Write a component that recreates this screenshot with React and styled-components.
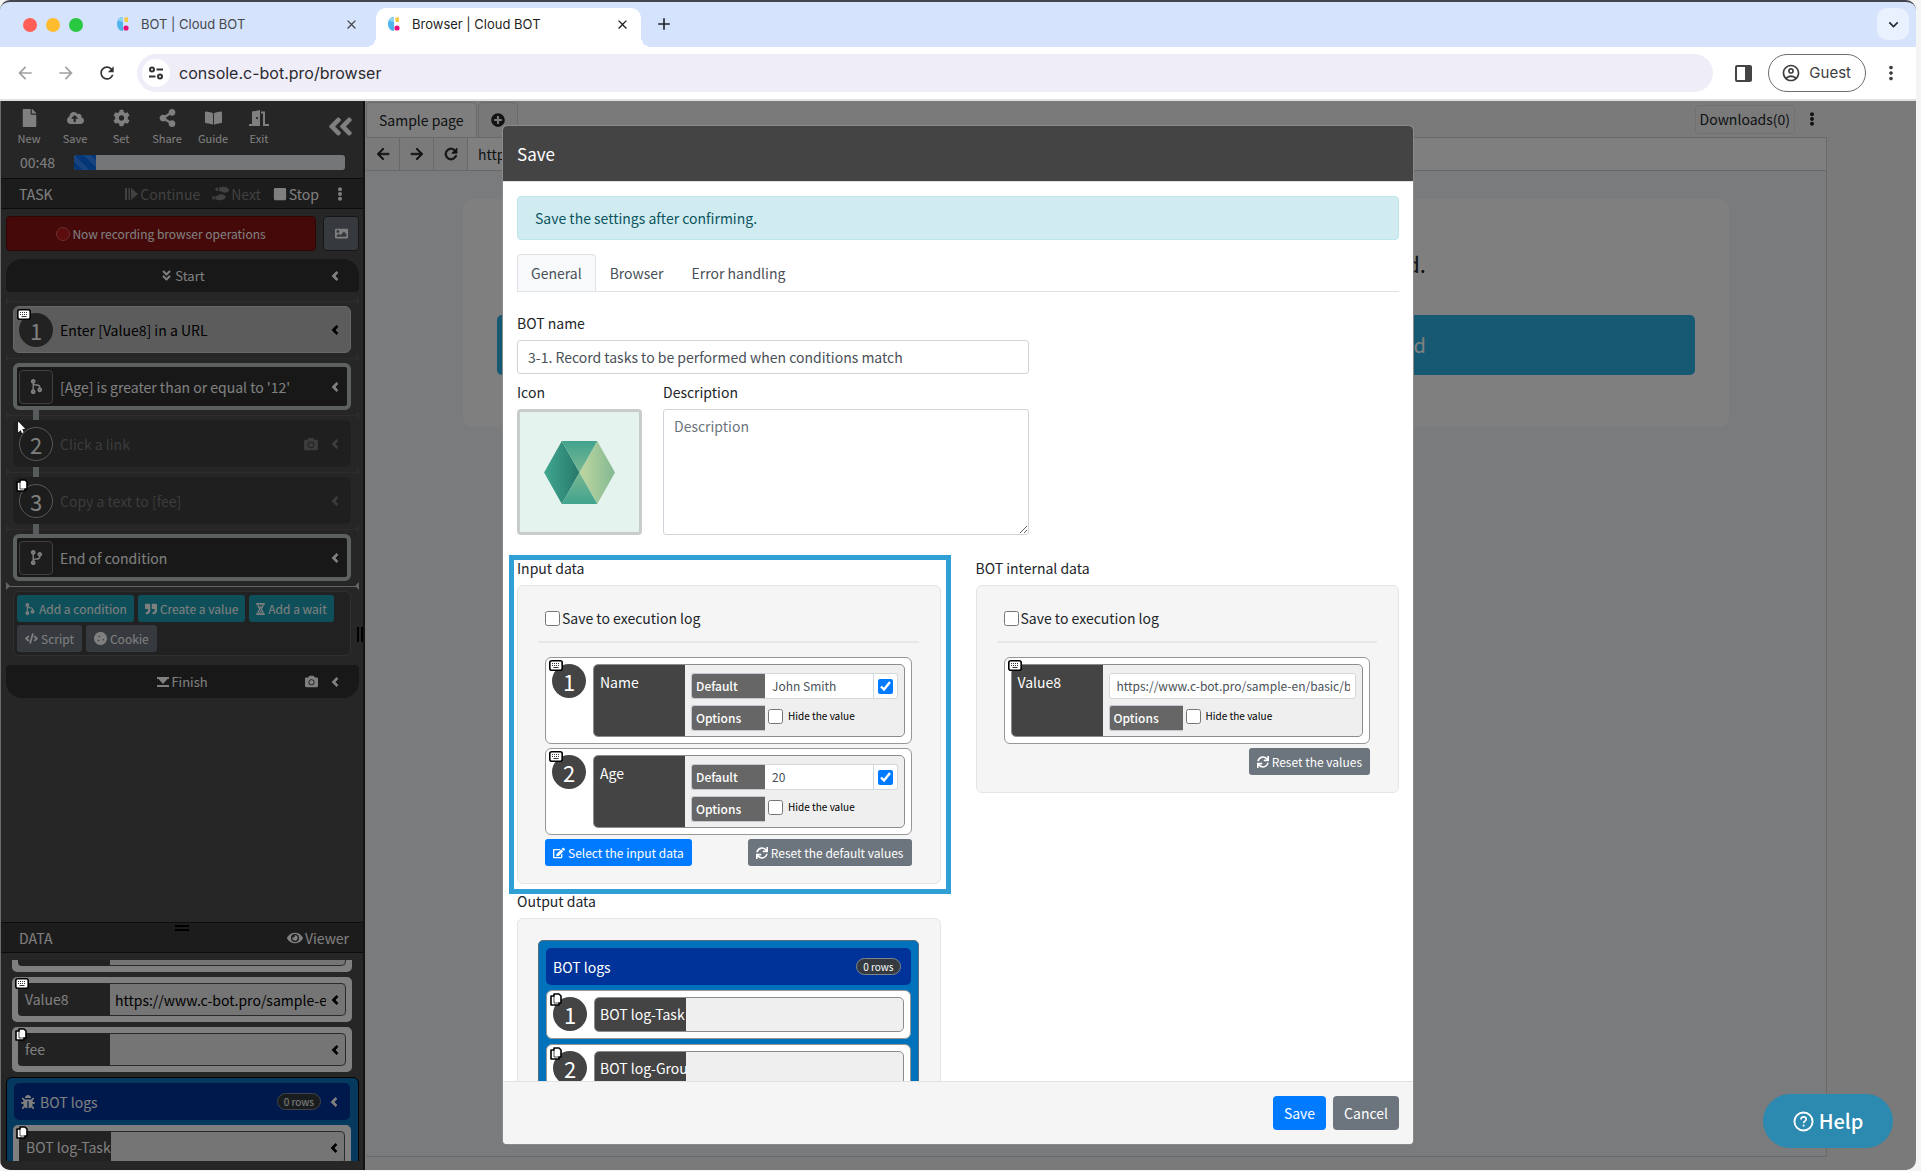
import React from 'react';
import styled, { createGlobalStyle, css } from 'styled-components';
import {
  FaAngleDoubleDown,
  FaAngleDoubleLeft,
  FaAngleLeft,
  FaBookOpen,
  FaBug,
  FaCamera,
  FaCloudUploadAlt,
  FaCode,
  FaCodeBranch,
  FaCog,
  FaCookie,
  FaEdit,
  FaEllipsisV,
  FaEye,
  FaFile,
  FaImage,
  FaMousePointer,
  FaPlusCircle,
  FaQuoteRight,
  FaShareAlt,
  FaShoePrints,
  FaSquare,
  FaSync,
} from 'react-icons/fa';
import {
  MdArrowBack,
  MdArrowForward,
  MdClose,
  MdAdd,
  MdKeyboardArrowDown,
  MdMoreVert,
  MdOutlineAccountCircle,
  MdRefresh,
} from 'react-icons/md';

const tools = [
  { label: 'New', icon: <FaFile /> },
  { label: 'Save', icon: <FaCloudUploadAlt /> },
  { label: 'Set', icon: <FaCog /> },
  { label: 'Share', icon: <FaShareAlt /> },
  { label: 'Guide', icon: <FaBookOpen /> },
  { label: 'Exit', icon: <DoorIcon /> },
];

const inputs = [
  { id: 1, name: 'Name', value: 'John Smith' },
  { id: 2, name: 'Age', value: '20' },
];

const logs = [
  { id: 1, name: 'BOT log-Task' },
  { id: 2, name: 'BOT log-Group' },
];

export default function App() {
  return (
    <>
      <GlobalStyle />
      <Window>
        <TabStrip />
        <AddressBar />
        <Workspace>
          <Sidebar />
          <RemoteBrowser />
          <Overlay>
            <SaveDialog />
          </Overlay>
          <HelpButton type='button'>
            <HelpIcon />
            Help
          </HelpButton>
        </Workspace>
      </Window>
    </>
  );
}

/* browser chrome */

function TabStrip() {
  return (
    <Strip>
      <Lights>
        <Light $color='#ff5f57' />
        <Light $color='#febc2e' />
        <Light $color='#28c840' />
      </Lights>
      <Tab>
        <CloudLogo />
        <TabTitle>BOT | Cloud BOT</TabTitle>
        <IconButton type='button' aria-label='Close tab'><MdClose /></IconButton>
      </Tab>
      <Tab $active>
        <CloudLogo />
        <TabTitle>Browser | Cloud BOT</TabTitle>
        <IconButton type='button' aria-label='Close tab'><MdClose /></IconButton>
      </Tab>
      <NewTab type='button' aria-label='New tab'><MdAdd /></NewTab>
      <TabSearch type='button' aria-label='Search tabs'><MdKeyboardArrowDown /></TabSearch>
    </Strip>
  );
}

function AddressBar() {
  return (
    <Toolbar>
      <NavButton type='button' aria-label='Back' $muted><MdArrowBack /></NavButton>
      <NavButton type='button' aria-label='Forward' $muted><MdArrowForward /></NavButton>
      <NavButton type='button' aria-label='Reload'><MdRefresh /></NavButton>
      <Omnibox>
        <SiteInfo type='button' aria-label='Site information'>
          <svg width='16' height='16' viewBox='0 0 16 16' fill='none' stroke='#333' strokeWidth='2'>
            <circle cx='4' cy='4.5' r='2' />
            <path d='M8.5 4.5H15M1 11.5h6.5' />
            <circle cx='12' cy='11.5' r='2' />
          </svg>
        </SiteInfo>
        <UrlInput aria-label='Address' defaultValue='console.c-bot.pro/browser' />
      </Omnibox>
      <PanelButton type='button' aria-label='Side panel'>
        <svg width='17' height='17' viewBox='0 0 17 17'>
          <rect x='1' y='1' width='15' height='15' rx='1' fill='#fff' stroke='#444' strokeWidth='2' />
          <rect x='10' y='1' width='6' height='15' fill='#444' />
        </svg>
      </PanelButton>
      <Guest type='button'>
        <MdOutlineAccountCircle />
        Guest
      </Guest>
      <MenuButton type='button' aria-label='Menu'><MdMoreVert /></MenuButton>
    </Toolbar>
  );
}

/* left hand task editor */

function Sidebar() {
  return (
    <Side>
      <SideTop>
        <ToolRow>
          {tools.map((tool) => (
            <Tool type='button' key={tool.label}>
              {tool.icon}
              {tool.label}
            </Tool>
          ))}
          <Collapse type='button' aria-label='Collapse'><FaAngleDoubleLeft /></Collapse>
        </ToolRow>
        <TimeRow>
          <span>00:48</span>
          <Progress><Bar style={{ width: '8%' }} /></Progress>
        </TimeRow>
      </SideTop>
      <SectionBar>
        <SectionTitle>TASK</SectionTitle>
        <BarButton type='button' disabled><ContinueIcon />Continue</BarButton>
        <BarButton type='button' disabled><FaShoePrints size='17' />Next</BarButton>
        <BarButton type='button'><FaSquare />Stop</BarButton>
        <BarButton type='button' aria-label='Task menu'><FaEllipsisV /></BarButton>
      </SectionBar>
      <Tasks>
        <RecordRow>
          <Recording type='button'><Dot />Now recording browser operations</Recording>
          <Shot type='button' aria-label='Screenshot'><FaImage /></Shot>
        </RecordRow>
        <EndCap>
          <span><FaAngleDoubleDown />Start</span>
          <Arrow />
        </EndCap>
        <Gap $first />
        <Task $kind='light'>
          <Badge><KeyboardIcon /></Badge>
          <Number>1</Number>
          <TaskName>Enter [Value8] in a URL</TaskName>
          <Arrow />
        </Task>
        <Gap />
        <Task $kind='branch'>
          <BranchBox $flip><FaCodeBranch /></BranchBox>
          <TaskName>[Age] is greater than or equal to '12'</TaskName>
          <Arrow />
        </Task>
        <Gap $link />
        <Task $kind='faint'>
          <Badge><FaMousePointer /></Badge>
          <Number $ring>2</Number>
          <TaskName>Click a link</TaskName>
          <FaCamera />
          <Arrow />
        </Task>
        <Gap $link />
        <Task $kind='faint'>
          <Badge><CopyIcon /></Badge>
          <Number $ring>3</Number>
          <TaskName>Copy a text to [fee]</TaskName>
          <Arrow />
        </Task>
        <Gap $link />
        <Task $kind='branch'>
          <BranchBox><FaCodeBranch /></BranchBox>
          <TaskName>End of condition</TaskName>
          <Arrow />
        </Task>
        <Gap $bright />
        <AddBox>
          <AddButton type='button'><Flipped><FaCodeBranch /></Flipped>Add a condition</AddButton>
          <AddButton type='button'><FaQuoteRight />Create a value</AddButton>
          <AddButton type='button'><HourglassIcon />Add a wait</AddButton>
          <AddButton type='button' $grey><FaCode />Script</AddButton>
          <AddButton type='button' $grey><FaCookie />Cookie</AddButton>
        </AddBox>
        <EndCap $bottom>
          <span><FinishIcon />Finish</span>
          <FaCamera />
          <Arrow />
        </EndCap>
        <Grip />
      </Tasks>
      <DataPane>
        <SectionBar>
          <SectionTitle>DATA</SectionTitle>
          <BarButton type='button'><FaEye size='16' />Viewer</BarButton>
          <PaneGrip />
        </SectionBar>
        <DataList>
          <DataScroll>
            <DataRow><DataName /><DataValue /></DataRow>
            <DataRow>
              <Badge><KeyboardIcon /></Badge>
              <DataName>Value8</DataName>
              <DataValue><span>https://www.c-bot.pro/sample-en</span><Arrow /></DataValue>
            </DataRow>
            <DataRow>
              <Badge><CopyIcon /></Badge>
              <DataName>fee</DataName>
              <DataValue><span /><Arrow /></DataValue>
            </DataRow>
            <SideLogs>
              <LogsHead>
                <FaBug />
                <LogsTitle>BOT logs</LogsTitle>
                <Pill>0 rows</Pill>
                <Arrow />
              </LogsHead>
              <DataRow>
                <Badge><CopyIcon /></Badge>
                <DataName>BOT log-Task</DataName>
                <DataValue><span /><Arrow /></DataValue>
              </DataRow>
            </SideLogs>
          </DataScroll>
        </DataList>
      </DataPane>
    </Side>
  );
}

/* recorded page behind the dialog */

function RemoteBrowser() {
  return (
    <Remote>
      <RemoteTabs>
        <RemoteTab type='button' $active>Sample page</RemoteTab>
        <RemoteTab type='button' aria-label='Add page'><FaPlusCircle /></RemoteTab>
        <Downloads type='button'>Downloads(0)</Downloads>
        <RemoteMenu type='button' aria-label='Page menu'><FaEllipsisV /></RemoteMenu>
      </RemoteTabs>
      <RemoteFrame>
        <RemoteBar>
          <RemoteNav type='button' aria-label='Page back'><MdArrowBack /></RemoteNav>
          <RemoteNav type='button' aria-label='Page forward'><MdArrowForward /></RemoteNav>
          <RemoteNav type='button' aria-label='Page reload'><MdRefresh /></RemoteNav>
          <RemoteUrl aria-label='Page address' defaultValue='http' />
        </RemoteBar>
        <RemotePage>
          <SampleCard>
            <p>d.</p>
            <button type='button'>ld</button>
          </SampleCard>
        </RemotePage>
      </RemoteFrame>
    </Remote>
  );
}

/* save dialog */

function SaveDialog() {
  return (
    <Dialog role='dialog' aria-labelledby='dialog-title'>
      <DialogHead id='dialog-title'>Save</DialogHead>
      <DialogBody>
        <Alert>Save the settings after confirming.</Alert>
        <NavTabs>
          <NavTab type='button' $active>General</NavTab>
          <NavTab type='button'>Browser</NavTab>
          <NavTab type='button'>Error handling</NavTab>
        </NavTabs>
        <Form>
          <Label htmlFor='bot-name'>BOT name</Label>
          <TextInput id='bot-name' defaultValue='3-1. Record tasks to be performed when conditions match' />
          <FormRow>
            <div>
              <Label as='div'>Icon</Label>
              <BotIcon type='button' aria-label='Icon'><HexIcon /></BotIcon>
            </div>
            <Grow>
              <Label htmlFor='description'>Description</Label>
              <TextArea id='description' placeholder='Description' />
            </Grow>
          </FormRow>
        </Form>
        <Columns>
          <Section $highlight>
            <Label as='h2'>Input data</Label>
            <Panel>
              <Check>
                <input type='checkbox' />
                Save to execution log
              </Check>
              <Rule />
              <Cards>
                {inputs.map((input) => (
                  <Card key={input.id}>
                    <Badge><KeyboardIcon /></Badge>
                    <Number $dialog>{input.id}</Number>
                    <CardInner>
                      <CardName>{input.name}</CardName>
                      <Fields>
                        <Field>
                          <FieldLabel htmlFor={`default-${input.id}`}>Default</FieldLabel>
                          <FieldInput id={`default-${input.id}`} defaultValue={input.value} />
                          <FieldCheck>
                            <input type='checkbox' defaultChecked aria-label='Use default' />
                          </FieldCheck>
                        </Field>
                        <Options />
                      </Fields>
                    </CardInner>
                  </Card>
                ))}
                <Actions>
                  <SmallButton type='button' $primary><FaEdit />Select the input data</SmallButton>
                  <SmallButton type='button'><FaSync />Reset the default values</SmallButton>
                </Actions>
              </Cards>
            </Panel>
          </Section>
          <Section>
            <Label as='h2'>BOT internal data</Label>
            <Panel>
              <Check>
                <input type='checkbox' />
                Save to execution log
              </Check>
              <Rule />
              <Cards>
                <Card>
                  <Badge><KeyboardIcon /></Badge>
                  <CardInner>
                    <CardName>Value8</CardName>
                    <Fields>
                      <Field>
                        <FieldInput
                          $round
                          aria-label='Value8'
                          defaultValue='https://www.c-bot.pro/sample-en/basic/bot'
                        />
                      </Field>
                      <Options />
                    </Fields>
                  </CardInner>
                </Card>
                <Actions $end>
                  <SmallButton type='button'><FaSync />Reset the values</SmallButton>
                </Actions>
              </Cards>
            </Panel>
          </Section>
          <Section>
            <Label as='h2'>Output data</Label>
            <Panel>
              <DialogLogs>
                <LogsHead $dialog>
                  <LogsTitle>BOT logs</LogsTitle>
                  <Pill>0 rows</Pill>
                </LogsHead>
                {logs.map((log) => (
                  <Card key={log.id}>
                    <Badge><CopyIcon /></Badge>
                    <Number $dialog>{log.id}</Number>
                    <CardInner $short>
                      <CardName $short>{log.name}</CardName>
                    </CardInner>
                  </Card>
                ))}
              </DialogLogs>
            </Panel>
          </Section>
        </Columns>
      </DialogBody>
      <DialogFoot>
        <FootButton type='button' $primary>Save</FootButton>
        <FootButton type='button'>Cancel</FootButton>
      </DialogFoot>
    </Dialog>
  );
}

function Options() {
  return (
    <Field>
      <FieldLabel as='span'>Options</FieldLabel>
      <HideCheck>
        <input type='checkbox' />
        Hide the value
      </HideCheck>
    </Field>
  );
}

/* icons */

function Arrow() {
  return <ArrowIcon aria-hidden='true' />;
}

function CloudLogo() {
  return (
    <svg width='14' height='16' viewBox='0 0 14 16'>
      <path d='M7 1C3 1 1 4.5 1 8s2 7 6 7z' fill='#4db4ee' />
      <path d='M7 1v5L2 4.5C3 2.5 5 1 7 1z' fill='#8fd4f5' />
      <path d='M8 2l4-1v5H9z' fill='#f6c844' />
      <circle cx='10' cy='12' r='2.6' fill='#e5107a' />
    </svg>
  );
}

function DoorIcon() {
  return (
    <svg width='20' height='16' viewBox='0 0 20 16' fill='currentColor'>
      <path fillRule='evenodd' d='M3 1.5 11 0v16H0v-2h3zM8 7a1 1 0 1 0 0 2.2A1 1 0 0 0 8 7z' />
      <path d='M12 1.5h4V14h4v2h-6V3.5h-2z' />
    </svg>
  );
}

function ContinueIcon() {
  return (
    <svg width='13' height='14' viewBox='0 0 13 14' fill='currentColor'>
      <path d='M0 1h2v12H0zM3.5 1h1.5v12H3.5zM6 1l7 6-7 6z' />
    </svg>
  );
}

function KeyboardIcon() {
  return (
    <svg width='14' height='11' viewBox='0 0 14 11'>
      <rect x='.8' y='.8' width='12.4' height='9.4' rx='2' fill='#fff' stroke='#000' strokeWidth='1.6' />
      <path d='M3 3.5h8M3 5.5h8' stroke='#333' strokeDasharray='1 1' />
      <path d='M4.5 7.5h5' stroke='#333' />
    </svg>
  );
}

function CopyIcon() {
  return (
    <svg width='12' height='13' viewBox='0 0 12 13' fill='#fff' stroke='#000'>
      <path d='M4 1h5l2 2v7H9v2H1V3h3z' strokeWidth='1.6' strokeLinejoin='round' />
      <path d='M4 3v7h5' fill='none' strokeWidth='.7' />
    </svg>
  );
}

function HourglassIcon() {
  return (
    <svg width='9' height='12' viewBox='0 0 10 14' fill='currentColor'>
      <path d='M0 0h10v2H0zM0 12h10v2H0z' />
      <path d='M2 2c0 3 2 3.5 2 5s-2 2-2 5M8 2c0 3-2 3.5-2 5s2 2 2 5' fill='none' stroke='currentColor' strokeWidth='1.5' />
      <path d='M3 4h4L5 7zM3 11l2-2 2 2z' />
    </svg>
  );
}

function FinishIcon() {
  return (
    <svg width='12' height='10' viewBox='0 0 12 10' fill='currentColor'>
      <path d='M0 0h12v2H0zM1.5 2h9L6 7zM0 8h12v2H0z' />
    </svg>
  );
}

function HelpIcon() {
  return (
    <svg width='21' height='21' viewBox='0 0 22 22' fill='none' stroke='currentColor' strokeWidth='2'>
      <circle cx='11' cy='11' r='9.5' />
      <path d='M8.3 9c0-3.8 5.6-3.5 5.6-.4 0 2-2.8 1.9-2.8 4M11.1 14.2v2' strokeWidth='1.7' />
    </svg>
  );
}

function HexIcon() {
  return (
    <svg width='71' height='63' viewBox='0 0 72 64'>
      <defs>
        <linearGradient id='hex-left'><stop stopColor='#41a78f' /><stop offset='1' stopColor='#27786b' /></linearGradient>
        <linearGradient id='hex-right'><stop stopColor='#c0d7a0' /><stop offset='1' stopColor='#82b992' /></linearGradient>
        <linearGradient id='hex-top' x2='0' y2='1'><stop stopColor='#41a38e' /><stop offset='1' stopColor='#7ab792' /></linearGradient>
        <linearGradient id='hex-bottom' x2='0' y2='1'><stop stopColor='#7ab792' /><stop offset='1' stopColor='#41a38e' /></linearGradient>
      </defs>
      <path d='M0 32 18 0l18 32-18 32z' fill='url(#hex-left)' />
      <path d='M72 32 54 0 36 32l18 32z' fill='url(#hex-right)' />
      <path d='M18 0h36L36 32z' fill='url(#hex-top)' />
      <path d='M18 64h36L36 32z' fill='url(#hex-bottom)' />
    </svg>
  );
}

const GlobalStyle = createGlobalStyle`
  *, *::before, *::after {
    box-sizing: border-box;
  }

  body {
    margin: 0;
    background: #f4f4f4;
    color: #212529;
    font-family: "Noto Sans CJK JP", "Noto Sans", sans-serif;
    font-size: 14px;
    line-height: 22px;
  }

  button, input, textarea {
    font: inherit;
    color: inherit;
    margin: 0;
  }

  button {
    padding: 0;
    border: 0;
    background: none;
    display: inline-flex;
    align-items: center;
    justify-content: center;
    white-space: nowrap;
  }

  h1, h2, p {
    margin: 0;
    font-weight: 400;
  }

  svg {
    flex: none;
  }
`

const Window = styled.div`
  display: flex;
  flex-direction: column;
  height: 100vh;
  padding: 0 5px 1px 0;
`

const Strip = styled.div`
  display: flex;
  align-items: flex-end;
  height: 47px;
  flex: none;
  padding: 0 7px 0 23px;
  border-top: 2px solid #45454d;
  border-radius: 10px 10px 0 0;
  background: #d5e3fd;
  font-family: Inter, sans-serif;
  font-size: 13px;
`

const Lights = styled.div`
  display: flex;
  gap: 9px;
  align-self: center;
`

const Light = styled.span`
  width: 14px;
  height: 14px;
  border-radius: 50%;
  background: ${(props) => props.$color};
`

const Tab = styled.div`
  position: relative;
  display: flex;
  align-items: center;
  gap: 11px;
  width: 265px;
  height: 39px;
  padding: 0 11px 7px;
  color: #46484c;

  ${Lights} + & {
    margin-left: 22px;
  }

  ${(props) => props.$active && css`
    margin-left: 6px;
    background: #fff;
    color: #1f1f1f;
    border-radius: 10px 10px 0 0;

    &::before, &::after {
      content: '';
      position: absolute;
      bottom: 0;
      width: 10px;
      height: 10px;
    }

    &::before {
      left: -10px;
      background: radial-gradient(circle at 0 0, transparent 10px, #fff 10px);
    }

    &::after {
      right: -10px;
      background: radial-gradient(circle at 100% 0, transparent 10px, #fff 10px);
    }
  `}
`

const TabTitle = styled.span`
  flex: 1;
`

const IconButton = styled.button`
  font-size: 15px;
`

const NewTab = styled.button`
  height: 39px;
  margin-left: 13px;
  padding-bottom: 7px;
  font-size: 20px;
`

const TabSearch = styled.button`
  width: 32px;
  height: 32px;
  margin: 0 0 7px auto;
  border-radius: 10px;
  background: #e9f0fe;
  font-size: 19px;
`

const Toolbar = styled.div`
  display: flex;
  align-items: center;
  flex: none;
  height: 54px;
  padding: 0 14px;
  border-bottom: 2px solid #dfe1e1;
  background: #fff;
  font-family: Inter, sans-serif;
  color: #3c3c3c;
`

const NavButton = styled.button`
  width: 22px;
  margin-right: 19px;
  font-size: 20px;
  color: ${(props) => (props.$muted ? '#a0a0a0' : '#333')};
`

const Omnibox = styled.div`
  display: flex;
  align-items: center;
  flex: 1;
  gap: 9px;
  height: 38px;
  padding: 0 5px;
  border-radius: 19px;
  background: #efeef8;
`

const SiteInfo = styled.button`
  width: 28px;
  height: 28px;
  border-radius: 50%;
  background: #fff;
`

const UrlInput = styled.input`
  flex: 1;
  border: 0;
  padding: 0;
  background: none;
  outline: 0;
  color: #2b2b2f;
  font-size: 16px;
`

const PanelButton = styled.button`
  margin: 0 16px 0 22px;
`

const Guest = styled.button`
  gap: 8px;
  height: 38px;
  padding: 0 14px 0 12px;
  border: 1px solid #6d6d6d;
  border-radius: 19px;
  font-size: 15px;

  svg {
    font-size: 20px;
  }
`

const MenuButton = styled.button`
  margin-left: 14px;
  font-size: 22px;
`

const Workspace = styled.div`
  position: relative;
  display: flex;
  flex: 1;
  min-height: 0;
  overflow: hidden;
  border-radius: 0 0 10px 10px;
`

const Side = styled.aside`
  display: flex;
  flex-direction: column;
  flex: none;
  width: 365px;
  border-right: 2px solid #262626;
  border-left: 1px solid #d8d8d8;
  background: #4c4c4c;
  color: #fff;
`

const SideTop = styled.div`
  flex: none;
  height: 77px;
  padding: 8px 18px 0 5px;
`

const ToolRow = styled.div`
  display: flex;
  height: 42px;
`

const Tool = styled.button`
  flex-direction: column;
  justify-content: flex-start;
  gap: 3px;
  width: 46px;
  font-size: 11px;
  line-height: 16px;

  svg {
    height: 18px;
    font-size: 17px;
  }
`

const Collapse = styled.button`
  margin: 0 -10px 0 auto;
  padding-bottom: 7px;
  font-size: 29px;
`

const TimeRow = styled.div`
  display: flex;
  align-items: center;
  gap: 19px;
  padding-left: 14px;
`

const Progress = styled.div`
  flex: 1;
  height: 15px;
  border-radius: 3px;
  background: #e9ecef;
  overflow: hidden;
`

const Bar = styled.div`
  height: 100%;
  background: repeating-linear-gradient(45deg, #0a6cf0 0 6px, #2f86ff 6px 11px);
`

const SectionBar = styled.div`
  position: relative;
  display: flex;
  align-items: center;
  flex: none;
  gap: 12px;
  height: 31px;
  padding: 0 14px 0 18px;
  border-top: 1px solid #181818;
  border-bottom: 1px solid #181818;
  background: #383838;
`

const SectionTitle = styled.h2`
  flex: 1;
  font-size: 14px;
`

const BarButton = styled.button`
  gap: 2px;

  &:disabled {
    color: #828282;
  }

  &:last-of-type {
    min-width: 18px;
  }
`

const Tasks = styled.div`
  position: relative;
  flex: 1;
  min-height: 0;
  padding: 7px 4px 0 5px;
`

const RecordRow = styled.div`
  display: flex;
  gap: 7px;
  margin-bottom: 8px;
`

const Recording = styled.button`
  flex: 1;
  gap: 2px;
  height: 35px;
  border: 1px solid #5c0c0c;
  border-radius: 4px;
  background: #8a1212;
  font-size: 12px;
`

const Dot = styled.span`
  width: 14px;
  height: 14px;
  border: 1px solid #d06060;
  border-radius: 50%;
  background: #b81818;
`

const Shot = styled.button`
  width: 36px;
  border: 1px solid #2c2c2c;
  border-radius: 4px;
  background: #6c757d;
  font-size: 13px;
`

const EndCap = styled.div`
  position: relative;
  display: flex;
  align-items: center;
  justify-content: flex-end;
  gap: 10px;
  height: 33px;
  margin-top: ${(props) => (props.$bottom ? '9px' : 0)};
  padding-right: 17px;
  border-radius: ${(props) => (props.$bottom ? '4px 4px 16px 16px' : '16px 16px 4px 4px')};
  background: #303030;
  font-size: 13px;

  span {
    position: absolute;
    inset: 0;
    display: flex;
    align-items: center;
    justify-content: center;
    gap: 2px;
  }

  svg {
    font-size: 13px;
  }
`

const ArrowIcon = styled(FaAngleLeft)`
  && {
    font-size: 14px;
    stroke: currentColor;
    stroke-width: 30;
  }
`

/* drop line between two tasks, with a small triangle at each end */
const Gap = styled.div`
  position: relative;
  height: 10px;
  margin-top: ${(props) => (props.$first ? '4px' : 0)};
  color: ${(props) => (props.$bright ? '#c8c8c8' : '#5a5a5a')};
  background: linear-gradient(currentColor, currentColor) 0 50% / 100% 1px no-repeat;

  &::before, &::after {
    content: '';
    position: absolute;
    top: 1px;
    border: 4px solid transparent;
  }

  &::before {
    left: 0;
    border-left-color: currentColor;
  }

  &::after {
    right: 0;
    border-right-color: currentColor;
  }

  ${(props) => props.$link && css`
    background:
      linear-gradient(#b0b6b6, #b0b6b6) 27px 0 / 6px 100% no-repeat,
      linear-gradient(currentColor, currentColor) 0 50% / 100% 1px no-repeat;
  `}
`

const Task = styled.div`
  position: relative;
  display: flex;
  align-items: center;
  gap: 7px;
  height: 47px;
  margin: 0 8px 0 7px;
  padding: 0 9px 0 6px;
  border-radius: 6px;

  ${(props) => props.$kind === 'light' && css`
    border: 1px solid #cfcfcf;
    background: #b8b8b8;
    color: #000;
    padding: 0 8px 0 5px;
  `}

  ${(props) => props.$kind === 'branch' && css`
    border: 4px solid #b9c0c0;
    background: #303030;
    padding: 0 5px 0 2px;
  `}

  ${(props) => props.$kind === 'faint' && css`
    background: #3e3e3e;
    color: #787878;
  `}
`

const TaskName = styled.span`
  flex: 1;
  white-space: nowrap;

  & + svg:not(:last-child) {
    margin-right: 3px;
  }
`

const Number = styled.span`
  display: flex;
  align-items: center;
  justify-content: center;
  flex: none;
  width: 34px;
  height: 34px;
  border-radius: 50%;
  background: #444;
  color: #fff;
  font-size: 22px;

  ${(props) => props.$ring && css`
    border: 1px solid #b0b0b0;
    background: #3a3a3a;
  `}

  ${(props) => props.$dialog && css`
    margin-right: 7px;
  `}
`

const BranchBox = styled.span`
  display: flex;
  align-items: center;
  justify-content: center;
  flex: none;
  width: 34px;
  height: 34px;
  border: 1px solid #808080;
  border-radius: 4px;
  background: #3a3a3a;
  font-size: 15px;

  svg {
    transform: ${(props) => (props.$flip ? 'scaleY(-1)' : 'none')};
  }
`

const Flipped = styled.span`
  display: flex;
  transform: scaleY(-1);
`

const Badge = styled.span`
  position: absolute;
  z-index: 1;
  top: 2px;
  left: 3px;
  display: flex;
  font-size: 11px;
  color: #fff;
`

const AddBox = styled.div`
  display: flex;
  flex-wrap: wrap;
  gap: 3px 4px;
  margin: 0 8px 0 7px;
  padding: 3px;
  border: 1px solid #606060;
  border-radius: 6px;
  background: #424242;
`

const AddButton = styled.button`
  gap: 3px;
  height: 27px;
  padding: 0 ${(props) => (props.$grey ? '8px' : '7px')};
  border-radius: 3px;
  background: ${(props) => (props.$grey ? '#6c757d' : '#1f9fb4')};
  font-size: 12px;

  svg {
    font-size: ${(props) => (props.$grey ? '13px' : '12px')};
  }
`

const Grip = styled.div`
  position: absolute;
  top: 418px;
  right: 0;
  width: 6px;
  height: 15px;
  border: solid #000;
  border-width: 0 2px;
`

const DataPane = styled.div`
  display: flex;
  flex-direction: column;
  flex: 0 0 248px;
  min-height: 0;
  padding-bottom: 9px;
`

const PaneGrip = styled.span`
  position: absolute;
  top: 2px;
  left: 174px;
  width: 14px;
  height: 6px;
  border: solid #000;
  border-width: 2px 0;
`

const DataList = styled.div`
  flex: 1;
  min-height: 0;
  margin-top: 7px;
  overflow: hidden;
`

/* the list is scrolled part of the way down */
const DataScroll = styled.div`
  display: flex;
  flex-direction: column;
  gap: 5px;
  margin-top: -33px;
  padding: 0 4px 0 5px;
`

const DataRow = styled.div`
  position: relative;
  display: flex;
  flex: none;
  height: 45px;
  margin: 0 7px 0 6px;
  border: 6px solid #fff;
  border-radius: 5px;
  background: #eaeaea;

  ${Badge} {
    top: -5px;
    left: -3px;
  }
`

const DataName = styled.span`
  flex: 0 0 92px;
  padding: 5px 0 0 7px;
  border-radius: 4px 0 0 4px;
  background: #444;
  color: #fff;
  white-space: nowrap;
`

const DataValue = styled.span`
  display: flex;
  align-items: center;
  flex: 1;
  min-width: 0;
  padding: 0 3px 0 5px;
  border: 1px solid #555;
  border-left: 0;
  border-radius: 0 5px 5px 0;
  color: #000;

  span {
    flex: 1;
    margin-right: 2px;
    overflow: hidden;
    white-space: nowrap;
  }
`

const SideLogs = styled.div`
  display: flex;
  flex-direction: column;
  gap: 5px;
  padding: 5px 0;
  border: 1px solid #000;
  border-radius: 6px;
  background: #0a74bd;
`

const LogsHead = styled.div`
  display: flex;
  align-items: center;
  gap: 5px;
  height: 37px;
  margin: ${(props) => (props.$dialog ? 0 : '0 8px 0 7px')};
  padding: 0 9px 0 7px;
  border-radius: 5px;
  background: #003399;
  color: #fff;
`

const LogsTitle = styled.span`
  flex: 1;
`

const Pill = styled.span`
  margin-right: 1px;
  padding: 0 6px;
  border: 1px solid #7d868f;
  border-radius: 9px;
  background: #343a40;
  font-size: 10px;
  line-height: 15px;
`

const Remote = styled.main`
  display: flex;
  flex-direction: column;
  flex: 1;
  padding: 0 89px 13px 1px;
  background: #f4f4f4;
`

const RemoteTabs = styled.div`
  display: flex;
  align-items: center;
  gap: 1px;
  height: 36px;
`

const RemoteTab = styled.button`
  align-self: flex-end;
  height: 35px;
  padding: 0 12px;
  border: 1px solid #d0d4d8;
  border-bottom: 0;
  border-radius: 5px 5px 0 0;
  background: ${(props) => (props.$active ? '#fcfcfc' : '#f0f0f0')};
`

const Downloads = styled.button`
  height: 29px;
  margin-left: auto;
  padding: 0 4px;
  border: 1px solid #e2e2e2;
  border-radius: 4px;
`

const RemoteMenu = styled.button`
  width: 31px;
`

const RemoteFrame = styled.div`
  display: flex;
  flex-direction: column;
  flex: 1;
  border: 1px solid #d0d2d4;
  border-left: 0;
`

const RemoteBar = styled.div`
  display: flex;
  height: 33px;
  border-bottom: 1px solid #d0d2d4;
  background: #fff;
`

const RemoteNav = styled.button`
  width: 34px;
  border-right: 1px solid #d0d4d8;
  background: #f4f4f4;
  font-size: 18px;

  path:last-child {
    stroke: currentColor;
    stroke-width: 1;
  }
`

const RemoteUrl = styled.input`
  flex: 1;
  padding: 0 10px;
  border: 0;
  background: none;
`

const RemotePage = styled.div`
  flex: 1;
  padding: 28px 97px;
  background: #f4f7fa;
`

const SampleCard = styled.div`
  padding: 50px 34px 52px;
  border-radius: 10px;
  background: #fff;

  p {
    margin-bottom: 38px;
    padding-right: 269px;
    font-size: 22px;
    line-height: 28px;
    text-align: right;
  }

  button {
    justify-content: flex-end;
    width: 100%;
    height: 60px;
    padding-right: 269px;
    border-radius: 5px;
    background: #2eb0e4;
    color: #fff;
    font-size: 20px;
  }
`

const Overlay = styled.div`
  position: absolute;
  inset: 0;
  display: flex;
  justify-content: center;
  padding: 25px 0 26px;
  background: rgba(0, 0, 0, 0.5);
`

const Dialog = styled.div`
  display: flex;
  flex-direction: column;
  width: 910px;
  max-width: 100%;
  border-radius: 4px;
  overflow: hidden;
  background: #fff;
  box-shadow: 0 0 0 1px #8a8a8a;
`

const DialogHead = styled.h1`
  flex: none;
  padding: 16px 14px 15px;
  border-bottom: 1px solid #dee2e6;
  background: #444;
  color: #fff;
  font-size: 17px;
  line-height: 24px;
`

const DialogBody = styled.div`
  flex: 1;
  min-height: 0;
  padding: 14px;
  overflow-y: auto;
  scrollbar-width: none;
`

const Alert = styled.div`
  padding: 10px 17px;
  border: 1px solid #bee5eb;
  border-radius: 4px;
  background: #d1ecf1;
  color: #0c5460;
`

const NavTabs = styled.div`
  display: flex;
  margin: 14px 0 20px;
  border-bottom: 1px solid #dee2e6;
`

const NavTab = styled.button`
  height: 37px;
  padding: 0 13px;
  border: 1px solid ${(props) => (props.$active ? '#dee2e6' : 'transparent')};
  border-bottom: 0;
  border-radius: 4px 4px 0 0;
  background: ${(props) => (props.$active ? '#f8f9fa' : 'none')};
  color: #495057;
`

const Form = styled.div`
  width: 58%;
`

const FormRow = styled.div`
  display: flex;
  gap: 21px;
  margin-top: 7px;
`

const Grow = styled.div`
  display: flex;
  flex-direction: column;
  flex: 1;
`

const Label = styled.label`
  display: block;
  margin-bottom: 6px;
  font-size: 14px;
`

const TextInput = styled.input`
  display: block;
  width: 100%;
  height: 34px;
  padding: 0 10px;
  border: 1px solid #ced4da;
  border-radius: 3px;
  color: #495057;
`

const TextArea = styled.textarea`
  flex: 1;
  min-height: 125px;
  padding: 5px 10px;
  border: 1px solid #ced4da;
  border-radius: 3px;

  &::placeholder {
    color: #6c757d;
  }
`

const BotIcon = styled.button`
  width: 125px;
  height: 126px;
  border: 3px solid #c9cccc;
  border-radius: 4px;
  background: #e5f3ee;
`

const Columns = styled.div`
  display: grid;
  grid-template-columns: repeat(2, minmax(0, 1fr));
  gap: 6px 35px;
  align-items: start;
  margin-top: 22px;
`

const Section = styled.section`
  position: relative;

  ${(props) => props.$highlight && css`
    &::after {
      content: '';
      position: absolute;
      inset: -2px -10px -10px -8px;
      border: 5px solid #2f9fd5;
      pointer-events: none;
    }
  `}
`

const Panel = styled.div`
  padding: 21px 21px 17px 20px;
  border: 1px solid #e3e5e7;
  border-radius: 6px;
  background: #f5f5f5;
`

const Check = styled.label`
  display: flex;
  align-items: center;
  gap: 2px;
  padding-left: 7px;

  input {
    width: 15px;
    height: 15px;
  }
`

const Rule = styled.hr`
  height: 2px;
  margin: 12px 0 14px;
  border: 0;
  background: #e6e7e7;
`

const Cards = styled.div`
  display: flex;
  flex-direction: column;
  gap: 4px;
  padding: 0 7px;
`

const Card = styled.div`
  position: relative;
  display: flex;
  padding: 6px;
  border: 1px solid #979797;
  border-radius: 6px;
  background: #fff;
`

const CardInner = styled.div`
  display: flex;
  flex: 1;
  min-width: 0;
  min-height: ${(props) => (props.$short ? '35px' : '73px')};
  border: 1px solid #8c8c8c;
  border-radius: 5px;
  background: #efefef;
  overflow: hidden;
`

const CardName = styled.div`
  flex: 0 0 91px;
  padding: ${(props) => (props.$short ? '5px 0 0 5px' : '6px 0 0 6px')};
  background: #444;
  color: #fff;
  white-space: nowrap;
  overflow: hidden;
`

const Fields = styled.div`
  display: flex;
  flex-direction: column;
  flex: 1;
  min-width: 0;
  gap: 6px;
  padding: 8px 6px 4px 6px;
`

const Field = styled.div`
  display: flex;
  height: 26px;
`

const FieldLabel = styled.label`
  flex: 0 0 74px;
  padding: 1px 4px;
  border: 1px solid #c3c9d0;
  border-right: 0;
  border-radius: 3px 0 0 3px;
  background: #666;
  color: #fff;
  font-size: 12px;
  font-weight: 500;
`

const FieldInput = styled.input`
  flex: 1;
  min-width: 0;
  padding: 0 5px 0 7px;
  border: 1px solid #d3d8dd;
  border-left-width: ${(props) => (props.$round ? '1px' : 0)};
  border-radius: ${(props) => (props.$round ? '3px' : 0)};
  background: #fff;
  color: #495057;
  font-size: 12px;
`

const FieldCheck = styled.span`
  display: flex;
  align-items: center;
  padding: 0 4px;
  border: 1px solid #d3d8dd;
  border-left: 0;
  border-radius: 0 3px 3px 0;
  background: #fff;

  input {
    width: 15px;
    height: 15px;
    accent-color: #007bff;
  }
`

const HideCheck = styled.label`
  display: flex;
  align-items: center;
  gap: 5px;
  padding: 0 0 4px 3px;
  color: #000;
  font-size: 10px;

  input {
    width: 15px;
    height: 15px;
  }
`

const Actions = styled.div`
  display: flex;
  justify-content: ${(props) => (props.$end ? 'flex-end' : 'space-between')};
`

const SmallButton = styled.button`
  gap: 3px;
  height: 27px;
  padding: 0 8px;
  border-radius: 3px;
  background: ${(props) => (props.$primary ? '#007bff' : '#6c757d')};
  color: #fff;
  font-size: 12px;
`

const DialogLogs = styled.div`
  display: flex;
  flex-direction: column;
  gap: 5px;
  padding: 7px;
  border: 1px solid #56707f;
  border-radius: 5px;
  background: #0072bc;
`

const DialogFoot = styled.div`
  display: flex;
  align-items: center;
  justify-content: flex-end;
  flex: none;
  gap: 7px;
  height: 63px;
  padding: 0 14px;
  border-top: 1px solid #dee2e6;
  background: #f5f5f5;
`

const FootButton = styled.button`
  height: 34px;
  padding: 0 11px;
  border-radius: 4px;
  background: ${(props) => (props.$primary ? '#007bff' : '#6c757d')};
  color: #fff;
`

const HelpButton = styled.button`
  position: absolute;
  right: 23px;
  bottom: 22px;
  gap: 5px;
  width: 130px;
  height: 54px;
  border-radius: 27px;
  background: #2c89b0;
  color: #fff;
  font-size: 20px;
  font-weight: 500;
`
